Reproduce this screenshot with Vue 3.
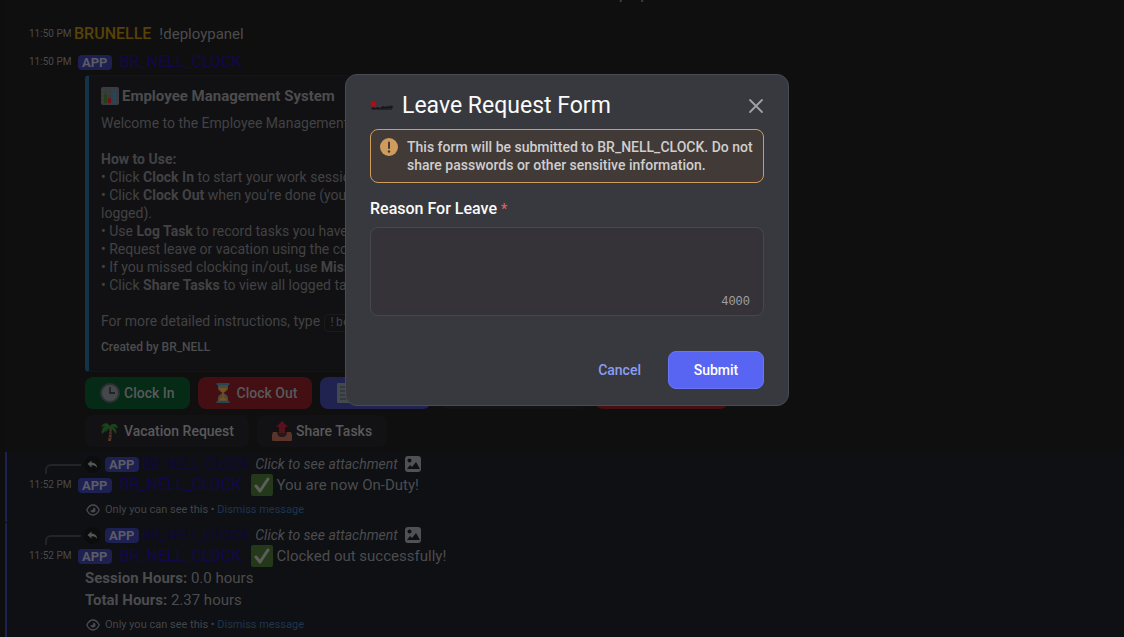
<script setup>
import { ref, computed } from 'vue'

const reason = ref('')
const remaining = computed(() => 4000 - reason.value.length)

const steps = [
  ['Click ', 'Clock In', ' to start your work session.'],
  ['Click ', 'Clock Out', " when you're done (your hours will be"],
  null,
  ['Use ', 'Log Task', ' to record tasks you have completed.'],
  ['Request leave or vacation using the corresponding buttons.', '', ''],
  ['If you missed clocking in/out, use ', 'Missed Clock', '.'],
  ['Click ', 'Share Tasks', ' to view all logged tasks.'],
]

const notices = [
  { id: 1, text: 'You are now On-Duty!', lines: [] },
  {
    id: 2,
    text: 'Clocked out successfully!',
    lines: [
      { label: 'Session Hours:', value: '0.0 hours' },
      { label: 'Total Hours:', value: '2.37 hours' },
    ],
  },
]
</script>

<template>
  <div class="app">
    <main class="chat">
      <p class="earlier"><span>y</span><span>,</span></p>

      <div class="line first">
        <time class="time">11:50 PM</time>
        <span class="author">BRUNELLE</span>
        <span class="body">!deploypanel</span>
      </div>

      <div class="line second">
        <time class="time">11:50 PM</time>
        <span class="tag">APP</span>
        <span class="bot">BR_NELL_CLOCK</span>
      </div>

      <article class="embed">
        <h2 class="embed-title">
          <svg width="18" height="18" viewBox="0 0 18 18" aria-hidden="true">
            <rect width="18" height="18" rx="2" fill="#3b3d40" />
            <path d="M1 5h16M1 9h16M1 13h16M5 1v16M9 1v16M13 1v16" stroke="#36383b" />
            <rect x="3" y="7" width="3" height="9" fill="#214216" />
            <rect x="7" y="11" width="3" height="5" fill="#6a121c" />
            <rect x="12" y="3" width="3" height="13" fill="#174a68" />
          </svg>
          Employee Management System
        </h2>
        <div class="embed-text">
          <p>Welcome to the Employee Management System!</p>
          <p class="how"><strong>How to Use:</strong></p>
          <template v-for="(s, i) in steps" :key="i">
            <p v-if="s">• {{ s[0] }}<strong>{{ s[1] }}</strong>{{ s[2] }}</p>
            <p v-else>logged).</p>
          </template>
          <p class="more">For more detailed instructions, type <code>!bothelp</code></p>
        </div>
        <footer class="embed-foot">Created by BR_NELL</footer>
      </article>

      <div class="actions">
        <button type="button" class="act green">
          <svg width="20" height="20" viewBox="0 0 20 20" aria-hidden="true">
            <circle cx="10" cy="10" r="9" fill="#45484a" stroke="#2d3134" stroke-width="2" />
            <path d="M10 4v6h5" fill="none" stroke="#161819" stroke-width="1.3" />
          </svg>
          Clock In
        </button>
        <button type="button" class="act red">
          <svg width="20" height="20" viewBox="0 0 20 20" aria-hidden="true">
            <path d="M5 2h10v3c0 3-4 4-4 5s4 2 4 5v3H5v-3c0-3 4-4 4-5S5 8 5 5z" fill="#54473a" />
            <path d="M6 5h8c0 2-4 3.500-4 5.500C10 8.500 6 7 6 5zM9.500 10h1v4l4 3.500h-9l4-3.500z" fill="#76551c" />
            <path d="M3.500 1h13M3.500 19h13" stroke="#20485b" stroke-width="2" />
          </svg>
          Clock Out
        </button>
        <button type="button" class="act blue log">
          <svg width="20" height="20" viewBox="0 0 20 20" aria-hidden="true">
            <rect x="1" width="18" height="20" rx="1" fill="#43494c" />
            <path d="M4 4h10M4 8h10M4 12h10M4 16h7" stroke="#252c30" />
          </svg>
          Log Task
        </button>
        <button type="button" class="act gray wide">Leave Request</button>
        <button type="button" class="act red tall">Missed Clock</button>
      </div>
      <div class="actions">
        <button type="button" class="act gray">
          <svg width="20" height="20" viewBox="0 0 20 20" aria-hidden="true">
            <path d="M10 6c2 5 2 9 1 14H8c1-5 2-9 1-13z" fill="#5b3426" />
            <path d="M9 10l2 1M9 13l3 1M8 16l3 1" stroke="#34201a" />
            <path d="M10 6C8 0 3 2 1 6l4-1c-3 2-4 5-3 8l3-3 1-2-1 4 4-5 3 4 0-3 4 5c1-3 0-6-3-7l5 1c-1-5-6-6-9-1z" fill="#1b421b" />
          </svg>
          Vacation Request
        </button>
        <button type="button" class="act gray">
          <svg width="20" height="20" viewBox="0 0 20 20" aria-hidden="true">
            <path d="M1 11h18l1 3v5q0 1-1 1H1q-1 0-1-1v-5z" fill="#5a3429" />
            <path d="M5 11h10q0 5-5 5t-5-5z" fill="#21191a" />
            <path d="M10 0l6 6h-3v6H7V6H4z" fill="#55121c" />
          </svg>
          Share Tasks
        </button>
      </div>

      <section class="notices">
        <article v-for="n in notices" :key="n.id" class="notice">
          <div class="reply">
            <span class="spine"></span>
            <svg class="arrow" width="17" height="17" viewBox="0 0 17 17" aria-hidden="true">
              <circle cx="8.500" cy="8.500" r="8.500" fill="#0c0c0d" />
              <path d="M7.500 4.500v2.200c3.500 0 5.500 1.800 5.500 5-1.300-2-3-2.500-5.500-2.500v2.300L3.500 8z" fill="#555659" />
            </svg>
            <span class="tag">APP</span>
            <span class="bot small">BR_NELL_CLOCK</span>
            <em>Click to see attachment</em>
            <svg width="18" height="18" viewBox="0 0 18 18" aria-hidden="true">
              <rect x="1" y="1" width="16" height="16" rx="3" fill="#505154" />
              <path d="M3 14l3-4 2 2 4-5 4 7z" fill="#0e1014" />
              <circle cx="5.500" cy="5.500" r="2" fill="#0e1014" />
            </svg>
          </div>
          <div class="line">
            <time class="time">11:52 PM</time>
            <span class="tag">APP</span>
            <span class="bot">BR_NELL_CLOCK</span>
            <svg class="check" width="22" height="22" viewBox="0 0 22 22" aria-hidden="true">
              <rect width="22" height="22" rx="2" fill="#23391a" />
              <path d="M5 12l4 5 8-12" fill="none" stroke="#5b5e59" stroke-width="3" stroke-linecap="round" stroke-linejoin="round" />
            </svg>
            <span class="body">{{ n.text }}</span>
          </div>
          <p v-for="l in n.lines" :key="l.label" class="stat"><strong>{{ l.label }}</strong> {{ l.value }}</p>
          <p class="private">
            <svg width="14" height="14" viewBox="0 0 14 14" aria-hidden="true">
              <path d="M.8 7C2.500 3.500 4.500 2 7 2s4.500 1.500 6.200 5C11.500 10.500 9.500 12 7 12S2.500 10.500.8 7z" fill="none" stroke="#4a4b4f" stroke-width="1.300" />
              <path d="M7 4.500A2.500 2.500 0 1 1 4.500 7 1.800 1.800 0 0 0 7 4.500z" fill="#4a4b4f" />
            </svg>
            <span>Only you can see this • <a href="#">Dismiss message</a></span>
          </p>
        </article>
      </section>
    </main>

    <div class="overlay">
      <form class="modal" role="dialog" aria-labelledby="form-title" @submit.prevent>
        <header class="modal-head">
          <svg width="24" height="24" viewBox="0 0 24 24" aria-hidden="true">
            <path d="M1 15l2-2 2 1 3-1 2 1 3-2 2 1 2-1 1 1 1-2 1 2 2-2 1 3z" fill="#17131b" />
            <path d="M2 15h20" stroke="#101019" />
            <circle cx="3.500" cy="10" r="2.800" fill="#b40b10" />
          </svg>
          <h1 id="form-title">Leave Request Form</h1>
          <button type="button" class="close" aria-label="Close">
            <svg width="16" height="16" viewBox="0 0 16 16" aria-hidden="true">
              <path d="M2 2l12 12M14 2L2 14" stroke="#a0a1a6" stroke-width="1.800" stroke-linecap="round" />
            </svg>
          </button>
        </header>

        <div class="warning">
          <svg width="18" height="18" viewBox="0 0 18 18" aria-hidden="true">
            <circle cx="9" cy="9" r="9" fill="#cf9c5d" />
            <path d="M9 4.500v5.500" stroke="#413a37" stroke-width="2" stroke-linecap="round" />
            <circle cx="9" cy="13.500" r="1.200" fill="#413a37" />
          </svg>
          <p>This form will be submitted to BR_NELL_CLOCK. Do not share passwords or other sensitive information.</p>
        </div>

        <label for="reason">Reason For Leave <span class="star">*</span></label>
        <div class="field">
          <textarea id="reason" v-model="reason" maxlength="4000" required></textarea>
          <span class="count">{{ remaining }}</span>
        </div>

        <div class="modal-foot">
          <button type="button" class="cancel">Cancel</button>
          <button type="submit" class="submit">Submit</button>
        </div>
      </form>
    </div>
  </div>
</template>

<style>
body {
  margin: 0;
  background: #0e0e0e;
}
</style>

<style scoped>
.app {
  position: relative;
  height: 100vh;
  overflow: hidden;
  font-family: Roboto, "Noto Sans", sans-serif;
  font-size: 16px;
  line-height: 22px;
  color: #4c4c4e;
}
h1, h2, p {
  margin: 0;
}
button {
  font: inherit;
  border: 0;
  cursor: pointer;
}
svg {
  flex: none;
}
.chat {
  height: 100%;
  margin-left: 5px;
  background: #0f0f0f;
}
.earlier {
  display: flex;
  align-items: flex-end;
  gap: 16px;
  height: 2px;
  padding-left: 612px;
  overflow: hidden;
  line-height: 12px;
}
.line {
  display: flex;
  align-items: center;
  padding-left: 24px;
  white-space: nowrap;
}
.first {
  margin-top: 21px;
}
.second {
  margin-top: 6px;
}
.time {
  width: 45px;
  font-size: 10px;
  color: #4a4a4c;
}
.author {
  color: #594208;
  margin-right: 8px;
  font-weight: 500;
}
.body, .stat {
  font-size: 15px;
}
.tag {
  margin: 0 8px 0 4px;
  padding: 0 4px;
  border-radius: 4px;
  background: #1d2050;
  color: #5b5c66;
  font-size: 13px;
  font-weight: 700;
  line-height: 15px;
}
.bot {
  color: #150650;
}
.embed {
  box-sizing: border-box;
  width: 520px;
  margin: 2px 0 5px 80px;
  padding: 10px 12px 16px;
  border: 1px solid #141416;
  border-left: 4px solid #12334a;
  border-radius: 4px;
  background: #111113;
}
.embed-title {
  display: flex;
  align-items: center;
  gap: 3px;
  margin-bottom: 8px;
  font-size: 15px;
  font-weight: 700;
  line-height: 20px;
}
.embed-text {
  font-size: 14px;
  line-height: 18px;
  color: #424244;
  white-space: nowrap;
}
.how, .more {
  margin-top: 18px;
}
code {
  padding: 1px 4px;
  border: 1px solid #1a1a1c;
  border-radius: 4px;
  font: 12px "Liberation Mono", monospace;
}
.embed-foot {
  margin-top: 9px;
  font-size: 12px;
  font-weight: 500;
  line-height: 16px;
}
.actions {
  display: flex;
  gap: 8px;
  margin: 0 0 6px 80px;
}
.act {
  display: flex;
  align-items: center;
  justify-content: center;
  gap: 4px;
  height: 32px;
  padding: 0 15px;
  border-radius: 8px;
  color: #59595b;
  font-size: 14px;
  font-weight: 500;
  white-space: nowrap;
}
.green { background: #052a15; }
.red { background: #430f13; }
.blue { background: #20224f; }
.gray { background: #121214; }
.log { width: 111px; }
.wide { width: 148px; }
.tall { width: 133px; }
.notices {
  display: grid;
  gap: 1px;
  margin-top: -1px;
}
.notice {
  padding: 2px 0 4px;
  border-left: 2px solid #1d2050;
  background: #0e1014;
}
.notice .line {
  padding-left: 22px;
}
.reply {
  display: flex;
  align-items: center;
  height: 20px;
  padding-left: 38px;
  font-size: 14px;
  white-space: nowrap;
}
.spine {
  align-self: flex-end;
  width: 36px;
  height: 10px;
  margin-right: 3px;
  border: solid #232427;
  border-width: 2px 0 0 2px;
  border-radius: 6px 0 0 0;
  box-sizing: border-box;
}
.reply .tag {
  margin-right: 4px;
}
.small {
  color: #10073a;
  margin-right: 6px;
}
em {
  margin-right: 6px;
}
.check {
  margin: 0 4px 0 9px;
}
.stat {
  padding-left: 78px;
}
.private {
  display: flex;
  align-items: center;
  gap: 5px;
  margin-top: 6px;
  padding-left: 79px;
  font-size: 11px;
  line-height: 16px;
  color: #444548;
}
.private a {
  color: #1f3550;
  text-decoration: none;
}
.overlay {
  position: absolute;
  inset: 0;
  display: flex;
  justify-content: center;
  align-items: flex-start;
  padding: 74px 0 0 10px;
}
.modal {
  box-sizing: border-box;
  width: 444px;
  max-width: 100%;
  padding: 16px 24px;
  border: 1px solid #4a4a51;
  border-radius: 12px;
  background: #38393e;
  color: #fbfbfb;
}
.modal-head {
  display: flex;
  align-items: center;
  gap: 8px;
  height: 30px;
  margin-bottom: 8px;
}
h1 {
  flex: 1;
  font-size: 23px;
  font-weight: 400;
  line-height: 24px;
}
.close {
  display: flex;
  padding: 0;
  background: none;
}
.warning {
  display: flex;
  gap: 9px;
  padding: 8px 8px 8px 9px;
  border: 1px solid #cf9c5d;
  border-radius: 8px;
  background: #413a37;
  color: #cfcecf;
  font-size: 14px;
  font-weight: 500;
  line-height: 18px;
}
label {
  display: block;
  margin: 15px 0 7px;
  font-size: 16px;
  font-weight: 500;
}
.star {
  color: #d9605f;
  font-size: 14px;
  line-height: 14px;
}
.field {
  position: relative;
}
textarea {
  display: block;
  box-sizing: border-box;
  width: 100%;
  height: 89px;
  padding: 10px;
  border: 1px solid #47474d;
  border-radius: 8px;
  outline: none;
  resize: none;
  background: #353338;
  color: #fbfbfb;
  font: inherit;
}
.count {
  position: absolute;
  right: 14px;
  bottom: 7px;
  color: #a0a1a6;
  font: 12px/14px "Liberation Mono", monospace;
}
.modal-foot {
  display: flex;
  justify-content: flex-end;
  gap: 8px;
  margin-top: 35px;
  font-size: 14px;
  font-weight: 500;
}
.cancel {
  padding: 0 19px;
  background: none;
  color: #8b9df0;
}
.submit {
  width: 96px;
  height: 38px;
  border: 1px solid #6a75f5;
  border-radius: 8px;
  background: #5865f2;
  color: #fff;
}
</style>
